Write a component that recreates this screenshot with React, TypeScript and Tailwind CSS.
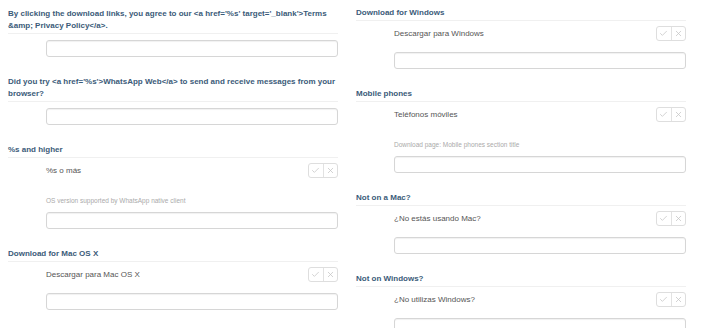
import React from "react";
import { Check, X } from "lucide-react";

type Item = {
  title: string;
  translation?: string;
  desc?: string;
};

const left: Item[] = [
  {
    title:
      "By clicking the download links, you agree to our <a href='%s' target='_blank'>Terms &amp; Privacy Policy</a>.",
  },
  {
    title:
      "Did you try <a href='%s'>WhatsApp Web</a> to send and receive messages from your browser?",
  },
  {
    title: "%s and higher",
    translation: "%s o más",
    desc: "OS version supported by WhatsApp native client",
  },
  { title: "Download for Mac OS X", translation: "Descargar para Mac OS X" },
];

const right: Item[] = [
  { title: "Download for Windows", translation: "Descargar para Windows" },
  {
    title: "Mobile phones",
    translation: "Teléfonos móviles",
    desc: "Download page: Mobile phones section title",
  },
  { title: "Not on a Mac?", translation: "¿No estás usando Mac?" },
  { title: "Not on Windows?", translation: "¿No utilizas Windows?" },
];

function Buttons() {
  return (
    <div className="flex h-[15px] w-[30px] shrink-0 rounded-[3px] border border-[#dedede] bg-white">
      <div className="flex flex-1 items-center justify-center border-r border-[#e2e2e2]">
        <Check size={9} strokeWidth={2} color="#c4c4c4" />
      </div>
      <div className="flex flex-1 items-center justify-center">
        <X size={9} strokeWidth={2} color="#c4c4c4" />
      </div>
    </div>
  );
}

function Section({ item }: { item: Item }) {
  return (
    <div className="flex flex-col">
      <div className="text-[8px] font-semibold leading-[12px] text-[#3b5b79]">
        {item.title}
      </div>
      <div className="mt-[1px] h-px bg-[#f0f0f0]" />
      <div className="pl-[38px]">
        {item.translation && (
          <div className="mt-[5px] flex items-center justify-between">
            <span className="text-[8px] leading-[12px] text-[#555]">
              {item.translation}
            </span>
            <Buttons />
          </div>
        )}
        {item.desc && (
          <div className="mt-[18px] text-[6.5px] leading-[10px] text-[#aaa]">
            {item.desc}
          </div>
        )}
        <div
          className={
            (item.translation && !item.desc ? "mt-[11px] " : "mt-[6px] ") +
            "h-[17px] rounded-[3px] border border-[#d6d6d6] bg-white shadow-[inset_0_1px_1px_rgba(0,0,0,0.06)]"
          }
        />
      </div>
    </div>
  );
}

export default function App() {
  return (
    <div
      className="h-[328px] w-[708px] overflow-hidden bg-white"
      style={{ fontFamily: '"Liberation Sans", Arial, sans-serif' }}
    >
      <div className="grid grid-cols-[330px_330px] gap-x-[18px] px-[8px]">
        <div className="flex flex-col gap-[19px] pt-[8px]">
          {left.map((it, i) => (
            <Section key={i} item={it} />
          ))}
        </div>
        <div className="flex flex-col gap-[19px] pt-[7px]">
          {right.map((it, i) => (
            <Section key={i} item={it} />
          ))}
        </div>
      </div>
    </div>
  );
}
